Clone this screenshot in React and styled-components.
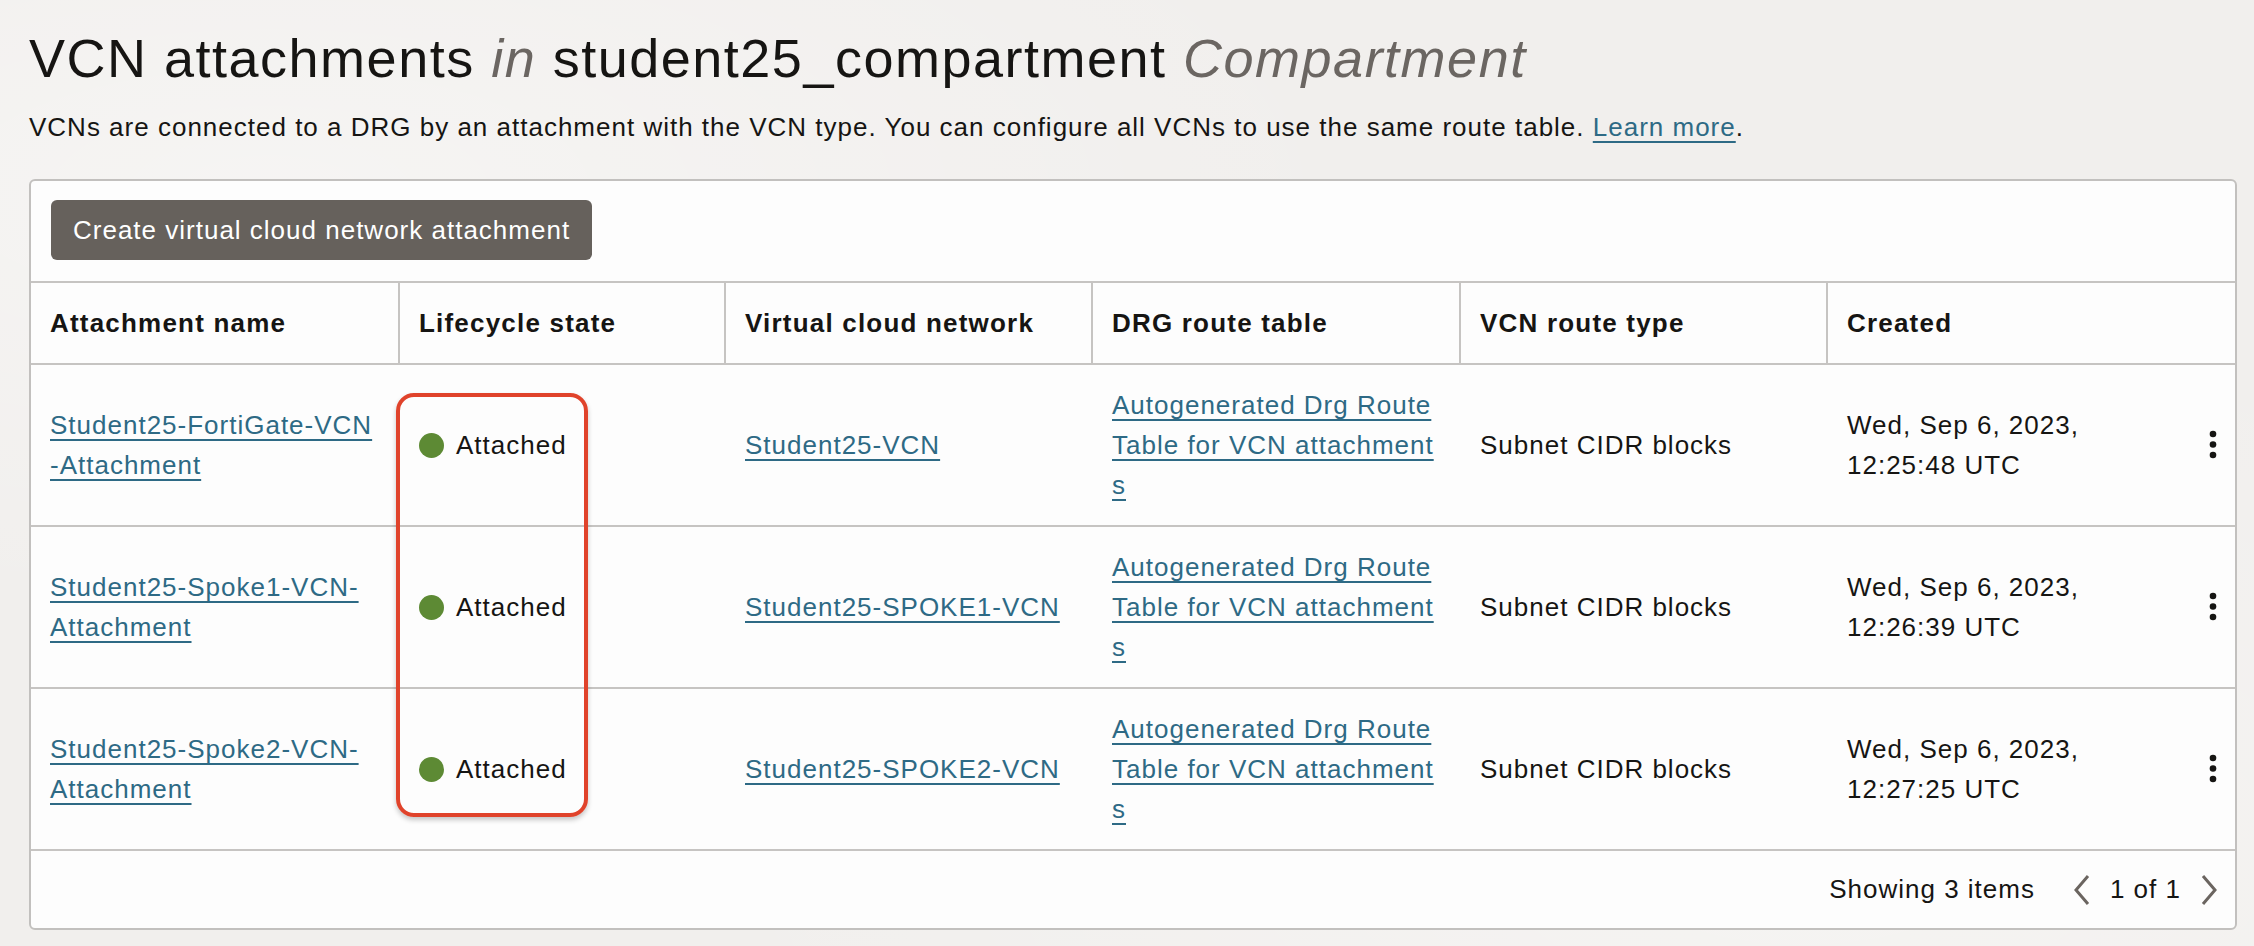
import React from 'react';
import styled, { createGlobalStyle } from 'styled-components';

const GlobalStyle = createGlobalStyle`
  html, body {
    margin: 0;
    padding: 0;
    background: #f1efed;
  }
  body {
    font-family: "Liberation Sans", Helvetica, Arial, sans-serif;
    color: #161513;
    letter-spacing: 1px;
  }
`;

const Page = styled.div`
  padding: 26px 17px 16px 29px;
  min-height: 946px;
  box-sizing: border-box;
  background-color: #f1efed;
  background-image:
    radial-gradient(ellipse at 12% 20%, rgba(255,255,255,0.35), transparent 40%),
    radial-gradient(ellipse at 80% 90%, rgba(255,255,255,0.3), transparent 45%);
`;

const Title = styled.h1`
  margin: 0;
  font-size: 54px;
  line-height: 64px;
  font-weight: 400;
  letter-spacing: 1.5px;
  color: #161513;

  em {
    color: #6b6662;
    font-style: italic;
  }
`;

const Intro = styled.p`
  margin: 17px 0 32px;
  font-size: 26px;
  line-height: 40px;
`;

const Link = styled.a`
  color: #2e6a85;
  text-decoration: underline;
  text-decoration-thickness: 2px;
  text-underline-offset: 5px;
  cursor: pointer;
`;

const Card = styled.div`
  background: #fdfdfd;
  border: 2px solid #c2c0be;
  border-radius: 6px;
  overflow: hidden;
`;

const Toolbar = styled.div`
  padding: 19px 20px 21px;
  display: flex;
`;

const Button = styled.button`
  height: 60px;
  padding: 0 22px;
  border: none;
  border-radius: 6px;
  background: #66615c;
  color: #fff;
  font-family: inherit;
  font-size: 26px;
  letter-spacing: 1px;
  cursor: pointer;
`;

const COLUMNS = '367px 326px 367px 368px 367px 1fr';

const HeadRow = styled.div`
  display: grid;
  grid-template-columns: ${COLUMNS};
  border-top: 2px solid #c6c4c2;
  border-bottom: 2px solid #c6c4c2;
  height: 80px;
`;

const HeadCell = styled.div`
  display: flex;
  align-items: center;
  padding: 0 19px;
  font-size: 26px;
  font-weight: 700;
  letter-spacing: 1.2px;
  border-left: ${({ $first }) => ($first ? 'none' : '2px solid #c6c4c2')};
`;

const Body = styled.div`
  position: relative;
`;

const Row = styled.div`
  display: grid;
  grid-template-columns: ${COLUMNS};
  height: 160px;
  border-bottom: 2px solid #c6c4c2;
`;

const Cell = styled.div`
  display: flex;
  align-items: center;
  justify-content: space-between;
  padding: 0 ${({ $first, $last }) => ($first ? '24px' : $last ? '18px' : '19px')} 0 19px;
  border-left: ${({ $first }) => ($first ? 'none' : '2px solid transparent')};
  font-size: 26px;
  line-height: 40px;
  min-width: 0;
`;

const Wrap = styled.span`
  word-break: break-all;
`;

const Status = styled.span`
  display: flex;
  align-items: center;
  gap: 12px;
`;

const Dot = styled.span`
  width: 25px;
  height: 25px;
  border-radius: 50%;
  background: #5d8a34;
  flex: none;
`;

const Highlight = styled.div`
  position: absolute;
  left: 365px;
  top: 28px;
  width: 192px;
  height: 424px;
  box-sizing: border-box;
  border: 4px solid #e0432b;
  border-radius: 18px;
  box-shadow: 0 3px 5px rgba(0, 0, 0, 0.22);
  pointer-events: none;
`;

const Footer = styled.div`
  height: 77px;
  display: flex;
  align-items: center;
  justify-content: flex-end;
  padding-right: 16px;
  font-size: 26px;
`;

const Pager = styled.div`
  display: flex;
  align-items: center;
  gap: 18px;
  margin-left: 37px;
`;

const IconButton = styled.span`
  display: flex;
  color: #6b6560;
`;

const Chevron = ({ dir }) => (
  <svg width="20" height="32" viewBox="0 0 20 32" fill="none">
    <polyline
      points={dir === 'left' ? '16,2 4,16 16,30' : '4,2 16,16 4,30'}
      stroke="currentColor"
      strokeWidth="3"
      strokeLinejoin="miter"
    />
  </svg>
);

const Kebab = () => (
  <svg width="8" height="30" viewBox="0 0 8 30">
    <circle cx="4" cy="4" r="3.3" fill="#161513" />
    <circle cx="4" cy="14.5" r="3.3" fill="#161513" />
    <circle cx="4" cy="25" r="3.3" fill="#161513" />
  </svg>
);

const rows = [
  {
    name: 'Student25-FortiGate-VCN-Attachment',
    vcn: 'Student25-VCN',
    created: ['Wed, Sep 6, 2023,', '12:25:48 UTC'],
  },
  {
    name: 'Student25-Spoke1-VCN-Attachment',
    vcn: 'Student25-SPOKE1-VCN',
    created: ['Wed, Sep 6, 2023,', '12:26:39 UTC'],
  },
  {
    name: 'Student25-Spoke2-VCN-Attachment',
    vcn: 'Student25-SPOKE2-VCN',
    created: ['Wed, Sep 6, 2023,', '12:27:25 UTC'],
  },
];

const headers = [
  'Attachment name',
  'Lifecycle state',
  'Virtual cloud network',
  'DRG route table',
  'VCN route type',
  'Created',
];

export default function App() {
  return (
    <>
      <GlobalStyle />
      <Page>
        <Title>
          VCN attachments <em>in</em> student25_compartment <em>Compartment</em>
        </Title>
        <Intro>
          VCNs are connected to a DRG by an attachment with the VCN type. You can configure all
          VCNs to use the same route table. <Link>Learn more</Link>.
        </Intro>
        <Card>
          <Toolbar>
            <Button>Create virtual cloud network attachment</Button>
          </Toolbar>
          <HeadRow>
            {headers.map((h, i) => (
              <HeadCell key={h} $first={i === 0}>{h}</HeadCell>
            ))}
          </HeadRow>
          <Body>
            {rows.map((r) => (
              <Row key={r.name}>
                <Cell $first>
                  <Wrap><Link>{r.name}</Link></Wrap>
                </Cell>
                <Cell>
                  <Status>
                    <Dot />
                    Attached
                  </Status>
                </Cell>
                <Cell>
                  <Link>{r.vcn}</Link>
                </Cell>
                <Cell>
                  <Wrap><Link>Autogenerated Drg Route Table for VCN attachments</Link></Wrap>
                </Cell>
                <Cell>Subnet CIDR blocks</Cell>
                <Cell $last>
                  <span>
                    {r.created[0]}
                    <br />
                    {r.created[1]}
                  </span>
                  <Kebab />
                </Cell>
              </Row>
            ))}
            <Highlight />
          </Body>
          <Footer>
            Showing 3 items
            <Pager>
              <IconButton><Chevron dir="left" /></IconButton>
              <span>1 of 1</span>
              <IconButton><Chevron dir="right" /></IconButton>
            </Pager>
          </Footer>
        </Card>
      </Page>
    </>
  );
}
